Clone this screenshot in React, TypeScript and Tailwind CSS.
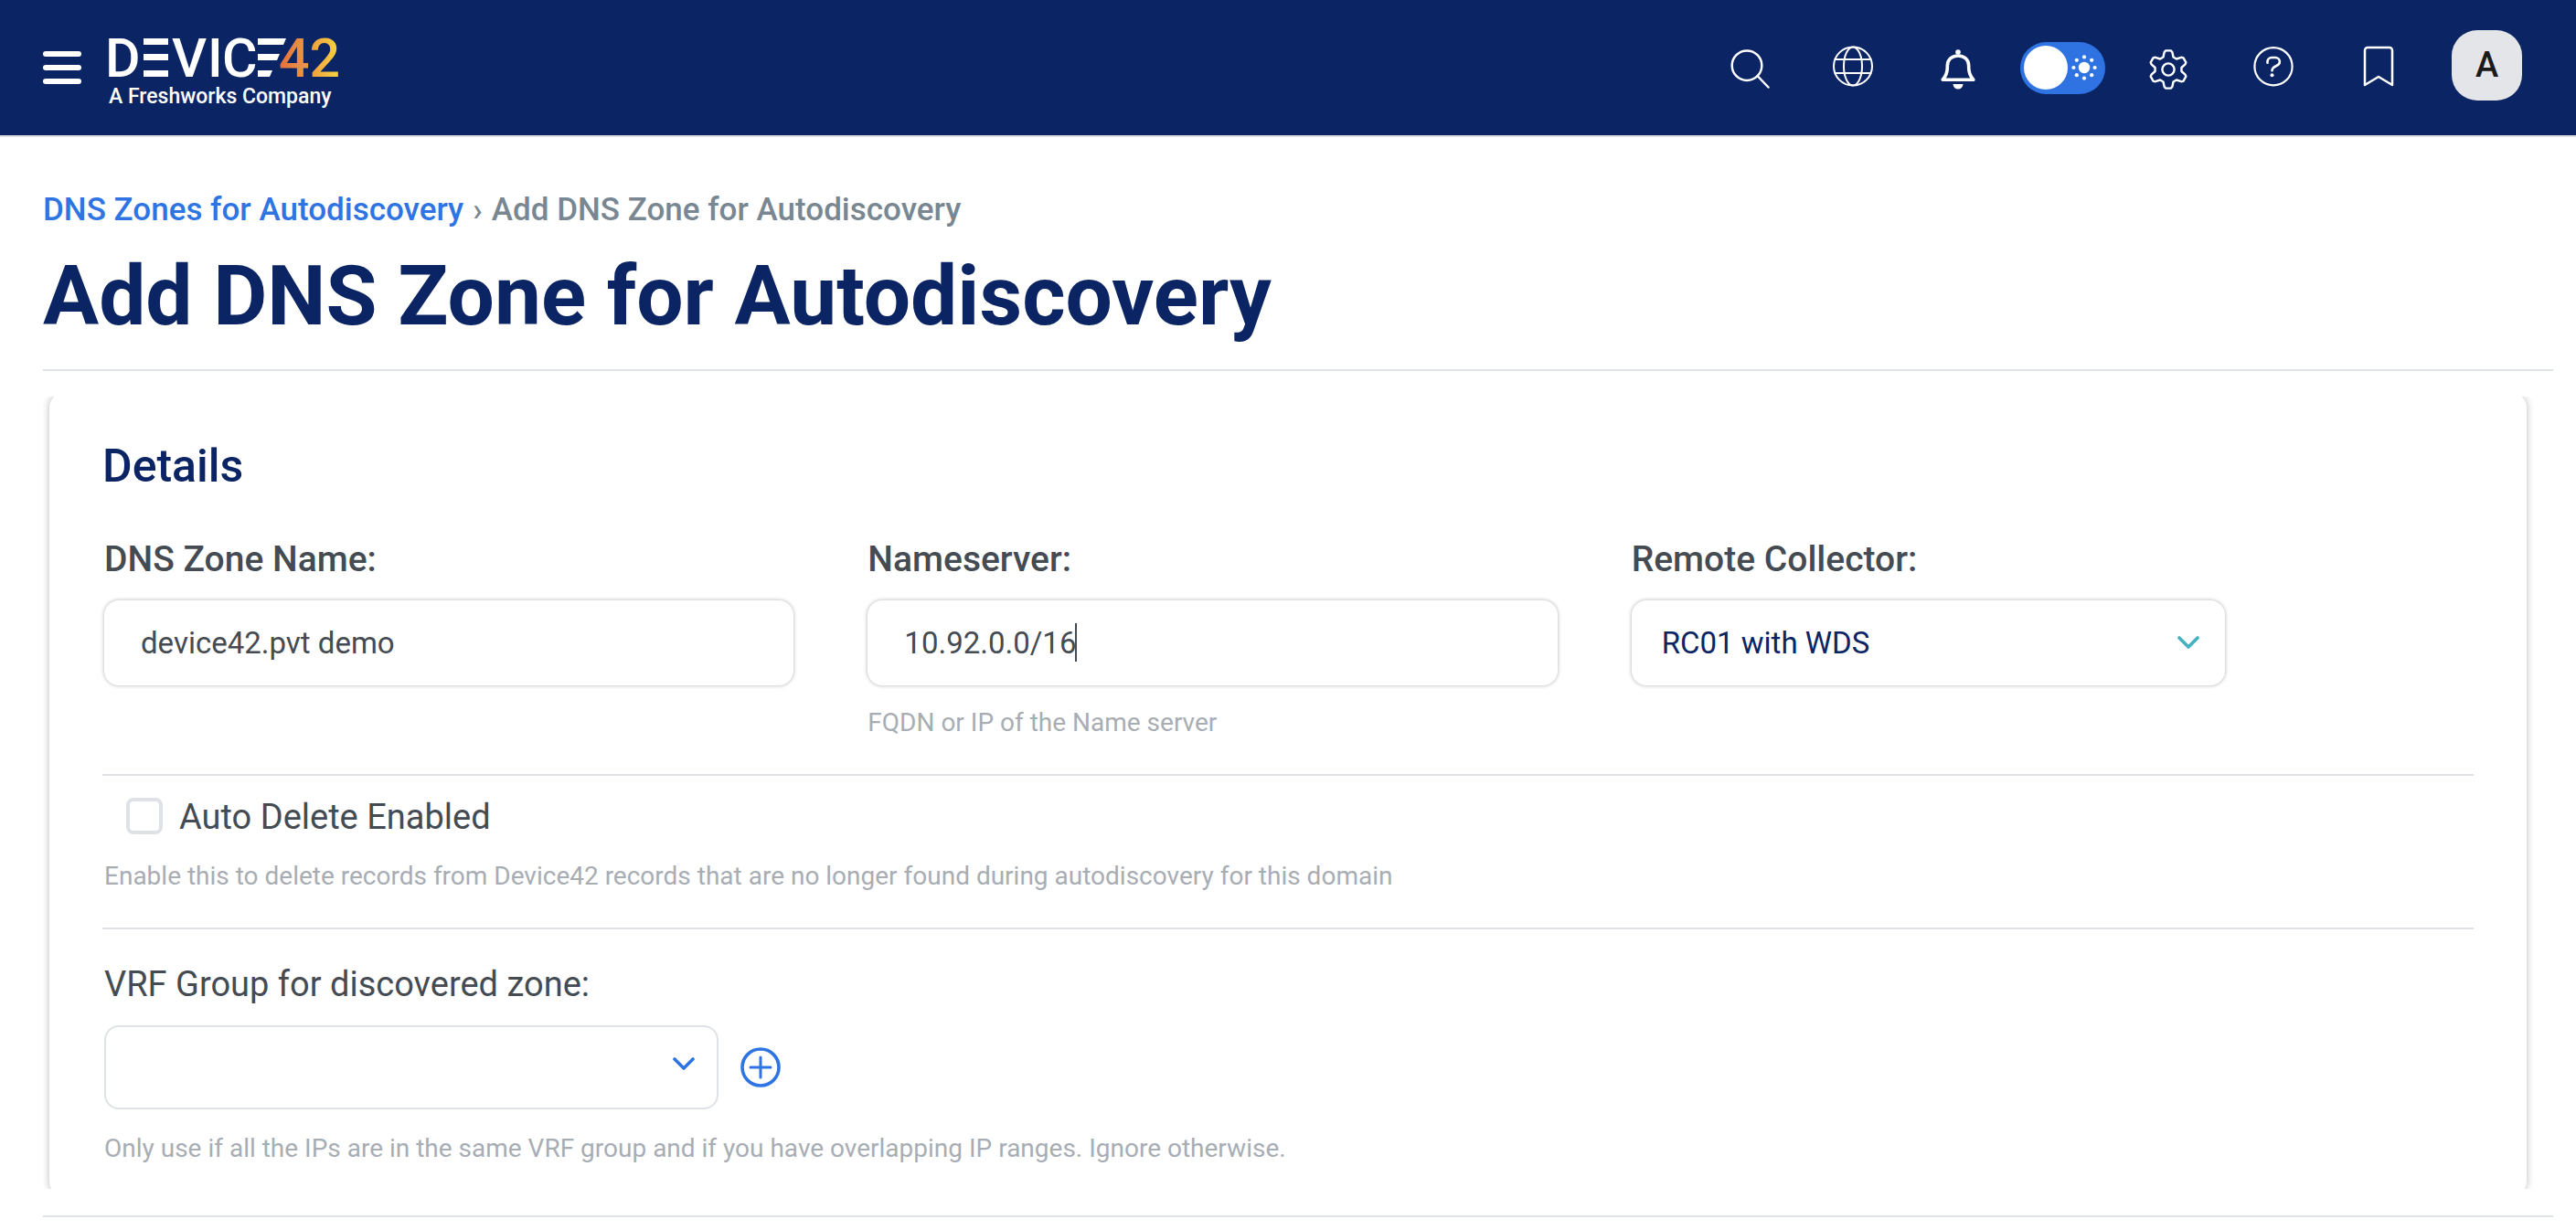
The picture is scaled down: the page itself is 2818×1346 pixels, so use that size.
import type { ReactNode } from "react";

function Icon({ children, width = 2.5 }: { children: ReactNode; width?: number }) {
  return (
    <svg
      viewBox="0 0 48 48"
      className="size-12"
      fill="none"
      stroke="currentColor"
      strokeWidth={width}
      strokeLinecap="round"
      strokeLinejoin="round"
      aria-hidden="true"
    >
      {children}
    </svg>
  );
}

const tooth = [
  [-5.5, -13.5],
  [-4.4, -18.8],
  [-3, -20.6],
  [3, -20.6],
  [4.4, -18.8],
  [5.5, -13.5],
];

const gearPoints = Array.from({ length: 6 }, (_, i) => (i * Math.PI) / 3)
  .flatMap((a) =>
    tooth.map(([x, y]) => {
      const px = 24 + x * Math.cos(a) - y * Math.sin(a);
      const py = 26 + x * Math.sin(a) + y * Math.cos(a);
      return `${px.toFixed(2)},${py.toFixed(2)}`;
    }),
  )
  .join(" ");

const sunRays = Array.from({ length: 8 }, (_, i) => {
  const a = (i * Math.PI) / 4;
  return { cx: 14 + 11.6 * Math.cos(a), cy: 14 + 11.6 * Math.sin(a) };
});

function NavButton({ label, children }: { label: string; children: ReactNode }) {
  return (
    <button type="button" aria-label={label} className="flex w-[115px] justify-center">
      {children}
    </button>
  );
}

function Logo() {
  return (
    <a href="#" aria-label="Device42, A Freshworks Company" className="ml-6">
      <svg viewBox="-6 -18 264 104" className="h-[104px] w-[264px]" fill="#fff" aria-hidden="true">
        <defs>
          <linearGradient id="logo-warm" gradientUnits="userSpaceOnUse" x1="190" y1="22" x2="250" y2="22">
            <stop offset="0" stopColor="#e5743f" />
            <stop offset="0.55" stopColor="#efa23f" />
            <stop offset="1" stopColor="#f6d142" />
          </linearGradient>
        </defs>
        <g fontFamily="Roboto, sans-serif" fontSize="59" fontWeight="500">
          <text x="-4" y="44">D</text>
          <text x="69" y="44">V</text>
          <text x="108" y="44">I</text>
          <text x="124" y="44">C</text>
          <text x="186" y="44" fill="url(#logo-warm)">42</text>
        </g>
        <g>
          <rect x="38" y="2" width="27" height="7" />
          <rect x="38" y="19" width="27" height="7" />
          <rect x="38" y="37" width="27" height="7" />
          <path d="M163 2H194L191 9H163Z" />
          <path d="M163 19H187L184 26H163Z" />
          <path d="M163 37H179L176 44H163Z" />
        </g>
        <text x="0" y="73" fontFamily="Roboto, sans-serif" fontSize="23" fontWeight="500">
          A Freshworks Company
        </text>
      </svg>
    </a>
  );
}

function Header() {
  return (
    <header className="flex items-center justify-between border-b-2 border-[#e0e0e3] bg-[#0b2464] pr-[59px] pl-[47px] text-white">
      <div className="flex h-[148px] items-center">
        <button type="button" aria-label="Menu" className="flex w-[42px] flex-col gap-[9px]">
          <span className="h-1.5 w-full rounded-full bg-white" />
          <span className="h-1.5 w-full rounded-full bg-white" />
          <span className="h-1.5 w-full rounded-full bg-white" />
        </button>
        <Logo />
      </div>
      <nav aria-label="Tools" className="flex items-center">
        <NavButton label="Search">
          <Icon>
            <circle cx="23" cy="21.7" r="16.3" />
            <path d="M35 33.5L46.5 45.5" />
          </Icon>
        </NavButton>
        <NavButton label="Language">
          <Icon width={2}>
            <circle cx="24" cy="22.5" r="21" />
            <ellipse cx="24" cy="22.5" rx="10" ry="21" />
            <path d="M4.5 15H43.5M4.5 30H43.5" />
          </Icon>
        </NavButton>
        <NavButton label="Notifications">
          <Icon width={3.6}>
            <path d="M7.2 37.3C11 33 12.3 29 12.3 24V22C12.3 15.5 17 11 24 11S35.7 15.5 35.7 22V24C35.7 29 37 33 40.8 37.3Z" />
            <circle cx="24" cy="7" r="2.8" fill="currentColor" stroke="none" />
            <path d="M18.5 42H29.5A5.5 5.5 0 0 1 18.5 42Z" fill="currentColor" stroke="none" />
          </Icon>
        </NavButton>
        <div className="flex w-[115px] justify-center">
          <button
            type="button"
            role="switch"
            aria-checked="false"
            aria-label="Dark mode"
            className="flex h-[57px] w-[93px] items-center justify-between rounded-full bg-[#2f73e2] pr-[9px] pl-1"
          >
            <span className="size-12 rounded-full bg-white" />
            <svg viewBox="0 0 28 28" className="size-7" fill="currentColor" aria-hidden="true">
              <circle cx="14" cy="14" r="6.2" />
              {sunRays.map((r, i) => (
                <circle key={i} cx={r.cx} cy={r.cy} r="2.1" />
              ))}
            </svg>
          </button>
        </div>
        <NavButton label="Settings">
          <Icon width={2.4}>
            <polygon points={gearPoints} />
            <circle cx="24" cy="26" r="6.6" />
          </Icon>
        </NavButton>
        <NavButton label="Help">
          <Icon width={2.2}>
            <circle cx="24" cy="22.7" r="20.6" />
            <path d="M17.5 18.8V17.5A4.5 4.5 0 0 1 22 13H26.2A4.7 4.7 0 0 1 30.9 17.7C30.9 23 22.5 21.5 22.5 27.3" strokeWidth="2.6" />
            <circle cx="22.5" cy="32.3" r="2" fill="currentColor" stroke="none" />
          </Icon>
        </NavButton>
        <NavButton label="Bookmarks">
          <Icon>
            <path d="M9 43V5A3 3 0 0 1 12 2H36A3 3 0 0 1 39 5V43L24 34Z" />
          </Icon>
        </NavButton>
        <button
          type="button"
          aria-label="Account"
          className="mb-1.5 ml-[23px] size-[77px] rounded-[28px] bg-[#e4e5e9] text-[38px] leading-none font-medium text-[#1b1b1b]"
        >
          A
        </button>
      </nav>
    </header>
  );
}

function Chevron({ className }: { className: string }) {
  return (
    <svg
      viewBox="0 0 24 14"
      className={className}
      fill="none"
      stroke="currentColor"
      strokeWidth="3.6"
      strokeLinecap="round"
      strokeLinejoin="round"
      aria-hidden="true"
    >
      <path d="M2 2L12 12L22 2" />
    </svg>
  );
}

const labelClass = "text-[39px] leading-[48px] font-medium";
const fieldClass =
  "mt-[21px] h-[93px] w-full rounded-2xl bg-white text-[33px] shadow-[0_0_4px_rgba(0,0,0,0.32)] outline-none";
const hintClass = "text-[28px] leading-9 text-[#a8adb4]";

export default function App() {
  return (
    <div className="min-h-screen bg-white font-['Roboto',sans-serif] text-[#454b52]">
      <Header />
      <main className="pt-14 pr-[25px] pl-[47px]">
        <nav aria-label="Breadcrumb" className="flex gap-2.5 text-[35px] leading-[48px] font-medium text-[#788791]">
          <a href="#" className="text-[#2f74e3]">DNS Zones for Autodiscovery</a>
          <span>›</span>
          <span>Add DNS Zone for Autodiscovery</span>
        </nav>
        <h1 className="mt-[18px] text-[91px] leading-[104px] font-bold text-[#0b2464]">
          Add DNS Zone for Autodiscovery
        </h1>
        <hr className="mt-7 border-t-2 border-[#dee2e6]" />

        <div className="mt-7 flow-root overflow-hidden pr-[29px] pl-[7px]">
          <form className="-mt-1 -mb-2 rounded-2xl bg-white px-[58px] pt-[50px] pb-[34px] shadow-[0_0_8px_rgba(0,0,0,0.28)]">
            <h2 className="text-[50px] leading-[60px] font-medium text-[#0b2464]">Details</h2>

            <div className="mt-12 grid grid-cols-[754fr_754fr_649fr] gap-x-[81px] pr-[272px] pl-0.5">
              <div>
                <label htmlFor="zone" className={`block ${labelClass}`}>DNS Zone Name:</label>
                <input id="zone" defaultValue="device42.pvt demo" className={`${fieldClass} px-10`} />
              </div>
              <div>
                <label htmlFor="nameserver" className={`block ${labelClass}`}>Nameserver:</label>
                <div className="relative">
                  <input
                    id="nameserver"
                    aria-describedby="nameserver-hint"
                    defaultValue="10.92.0.0/16"
                    className={`${fieldClass} px-10`}
                  />
                  <span className="absolute bottom-[26px] left-[227px] h-[42px] w-0.5 bg-[#454b52]" />
                </div>
                <p id="nameserver-hint" className={`mt-[23px] ${hintClass}`}>FQDN or IP of the Name server</p>
              </div>
              <div>
                <label htmlFor="collector" className={`block ${labelClass}`}>Remote Collector:</label>
                <div className="relative">
                  <select id="collector" className={`${fieldClass} appearance-none pr-16 pl-[33px] text-[#0b2464]`}>
                    <option>RC01 with WDS</option>
                  </select>
                  <Chevron className="pointer-events-none absolute right-7 bottom-10 h-3.5 w-6 text-[#45b0c1]" />
                </div>
              </div>
            </div>

            <hr className="mt-[38px] border-t-2 border-[#dee2e6]" />
            <div className="mt-6 flex h-10 items-center gap-[18px] pl-[26px]">
              <input
                id="auto-delete"
                type="checkbox"
                aria-describedby="auto-delete-hint"
                className="size-10 appearance-none rounded-lg border-4 border-[#dee2e6] bg-white"
              />
              <label htmlFor="auto-delete" className="pt-0.5 text-[38px] leading-10">Auto Delete Enabled</label>
            </div>
            <p id="auto-delete-hint" className={`mt-7 pl-0.5 ${hintClass}`}>
              Enable this to delete records from Device42 records that are no longer found during autodiscovery for this domain
            </p>

            <hr className="mt-[38px] border-t-2 border-[#dee2e6]" />
            <div className="mt-9 pl-0.5">
              <label htmlFor="vrf" className="block text-[38px] leading-[48px]">VRF Group for discovered zone:</label>
              <div className="mt-[21px] flex items-center gap-6">
                <div className="relative w-[672px]">
                  <select
                    id="vrf"
                    aria-describedby="vrf-hint"
                    className="block h-[92px] w-full appearance-none rounded-2xl border-2 border-[#dee2e6] bg-white text-[33px] outline-none"
                  >
                    <option></option>
                  </select>
                  <Chevron className="pointer-events-none absolute right-[26px] bottom-[43px] h-3.5 w-6 text-[#2f74e3]" />
                </div>
                <button type="button" aria-label="Add VRF group" className="text-[#2f74e3]">
                  <svg viewBox="0 0 44 44" className="size-11" fill="none" stroke="currentColor" strokeLinecap="round" aria-hidden="true">
                    <circle cx="22" cy="22" r="20" strokeWidth="3.6" />
                    <path d="M22 11V33M11 22H33" strokeWidth="3" />
                  </svg>
                </button>
              </div>
              <p id="vrf-hint" className={`mt-[25px] ${hintClass}`}>
                Only use if all the IPs are in the same VRF group and if you have overlapping IP ranges. Ignore otherwise.
              </p>
            </div>
          </form>
        </div>
        <hr className="mt-[29px] border-t-2 border-[#dee2e6]" />
      </main>
    </div>
  );
}
